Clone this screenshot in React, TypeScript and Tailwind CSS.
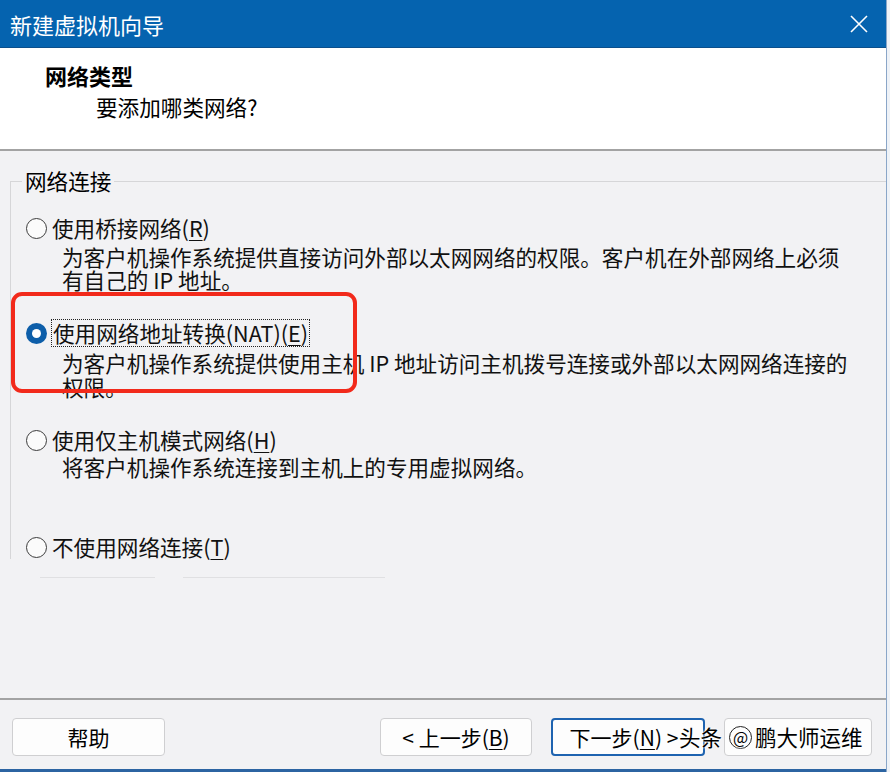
import React from "react";

function Radio({ checked }: { checked?: boolean }) {
  return checked ? (
    <span className="w-[21px] h-[21px] rounded-full bg-[#0d5ea9] flex items-center justify-center shrink-0">
      <span className="w-[9px] h-[9px] rounded-full bg-white" />
    </span>
  ) : (
    <span className="w-[21px] h-[21px] rounded-full border-[1.5px] border-[#3c3c3c] bg-[#fbfbfb] shrink-0" />
  );
}

function U({ children }: { children: React.ReactNode }) {
  return <span className="underline underline-offset-[3px] decoration-1">{children}</span>;
}

export default function App() {
  return (
    <div className="w-[890px] h-[772px] bg-[#eef2f7] flex font-['Noto_Sans_CJK_SC','Noto_Sans',sans-serif] text-[#111]">
      <div className="w-[887px] h-full flex flex-col border-r border-[#8aa6c8] relative">
        {/* Title bar */}
        <div className="h-[48px] bg-[#0563af] flex items-center justify-between pl-[10px] pr-[14px] shrink-0 border-b border-[#0b4f8c]">
          <span className="text-white text-[22px] leading-[24px]">新建虚拟机向导</span>
          <svg width="20" height="20" viewBox="0 0 20 20" className="mr-[3px]">
            <path d="M2 2 L18 18 M18 2 L2 18" stroke="white" strokeWidth="1.6" fill="none" />
          </svg>
        </div>

        {/* Header */}
        <div className="h-[103px] bg-white border-b-2 border-[#a3a3a3] shrink-0 pl-[45px] pt-[15px]">
          <div className="text-[22px] leading-[24px] font-bold text-black">网络类型</div>
          <div className="mt-[8px] ml-[51px] text-[21.6px] leading-[24px] text-black">要添加哪类网络?</div>
        </div>

        {/* Body */}
        <div className="flex-1 bg-[#f2f2f4] relative pt-[18px] text-[21.6px]">
          {/* group label row */}
          <div className="flex items-stretch h-[24px] ml-[10px]">
            <div className="w-[12px] flex flex-col">
              <div className="h-[12px]" />
              <div className="flex-1 border-l border-t border-[#d6d6d8]" />
            </div>
            <span className="px-[3px] leading-[24px] text-black">网络连接</span>
            <div className="flex-1 flex flex-col">
              <div className="h-[12px]" />
              <div className="border-t border-[#d6d6d8]" />
            </div>
          </div>

          <div className="ml-[10px] border-l border-[#d6d6d8] pl-[15px]">
            {/* option 1 */}
            <div className="pt-[23px] flex items-center gap-[5px] h-[47px]">
              <Radio />
              <span className="leading-[24px] whitespace-nowrap">
                使用桥接网络(<U>R</U>)
              </span>
            </div>
            <div className="mt-[5px] pl-[36px] leading-[23px] whitespace-nowrap">
              <div>为客户机操作系统提供直接访问外部以太网网络的权限。客户机在外部网络上必须</div>
              <div>有自己的 IP 地址。</div>
            </div>

            {/* option 2 */}
            <div className="mt-[28px] flex items-center gap-[4px] h-[28px]">
              <Radio checked />
              <span className="leading-[26px] whitespace-nowrap border border-dotted border-[#222] px-[1px]">
                使用网络地址转换(NAT)(<U>E</U>)
              </span>
            </div>
            <div className="mt-[4px] pl-[36px] leading-[24px] whitespace-nowrap">
              <div>为客户机操作系统提供使用主机 IP 地址访问主机拨号连接或外部以太网网络连接的</div>
              <div>权限。</div>
            </div>

            {/* option 3 */}
            <div className="mt-[29px] flex items-center gap-[5px] h-[24px]">
              <Radio />
              <span className="leading-[24px] whitespace-nowrap">
                使用仅主机模式网络(<U>H</U>)
              </span>
            </div>
            <div className="mt-[3px] pl-[36px] leading-[23px] whitespace-nowrap">
              <div>将客户机操作系统连接到主机上的专用虚拟网络。</div>
            </div>

            {/* option 4 */}
            <div className="mt-[57px] flex items-center gap-[5px] h-[24px]">
              <Radio />
              <span className="leading-[24px] whitespace-nowrap">
                不使用网络连接(<U>T</U>)
              </span>
            </div>
          </div>

          <div className="mt-[18px] flex items-center">
            <div className="ml-[40px] w-[115px] h-px bg-[#e0e0e2]" />
            <div className="ml-[28px] w-[202px] h-px bg-[#e0e0e2]" />
          </div>

          {/* red annotation box */}
          <div className="absolute left-[11px] top-[141px] w-[346px] h-[101px] border-4 border-[#f22a1b] rounded-[11px]" />
        </div>

        {/* Footer */}
        <div className="h-[71px] bg-[#f2f2f4] border-t-2 border-[#a3a3a3] shrink-0 flex items-start justify-between pl-[12px] pr-[14px] pt-[18px] relative">
          <button className="w-[153px] h-[38px] rounded-[4px] border border-[#cfcfd1] bg-[#fdfdfd] text-[21px] leading-[24px] text-black">
            帮助
          </button>
          <div className="flex gap-[19px]">
            <button className="w-[152px] h-[38px] rounded-[4px] border border-[#cfcfd1] bg-[#fdfdfd] text-[21px] leading-[24px] text-black whitespace-nowrap">
              &lt; 上一步(<U>B</U>)
            </button>
            <button className="w-[154px] h-[38px] rounded-[4px] border-2 border-[#1e63b0] bg-[#fdfdfd] text-[21px] leading-[24px] text-black whitespace-nowrap pr-[8px]">
              下一步(<U>N</U>) &gt;
            </button>
            <button className="w-[148px] h-[38px] rounded-[4px] border border-[#cfcfd1] bg-[#fdfdfd]" />
          </div>

          {/* watermark */}
          <div className="absolute left-[679px] top-[24px] flex items-center text-[21.5px] leading-[26px] text-black [text-shadow:0_0_2px_#fff,0_0_2px_#fff,0_0_3px_#fff] whitespace-nowrap">
            <span>头条</span>
            <span className="ml-[7px] w-[23px] h-[23px] rounded-full border-[1.5px] border-[#222] flex items-center justify-center text-[16px] leading-none">@</span>
            <span className="ml-[3px]">鹏大师运维</span>
          </div>
        </div>

        <div className="h-[3px] bg-[#2c64a2] shrink-0" />
      </div>
    </div>
  );
}
